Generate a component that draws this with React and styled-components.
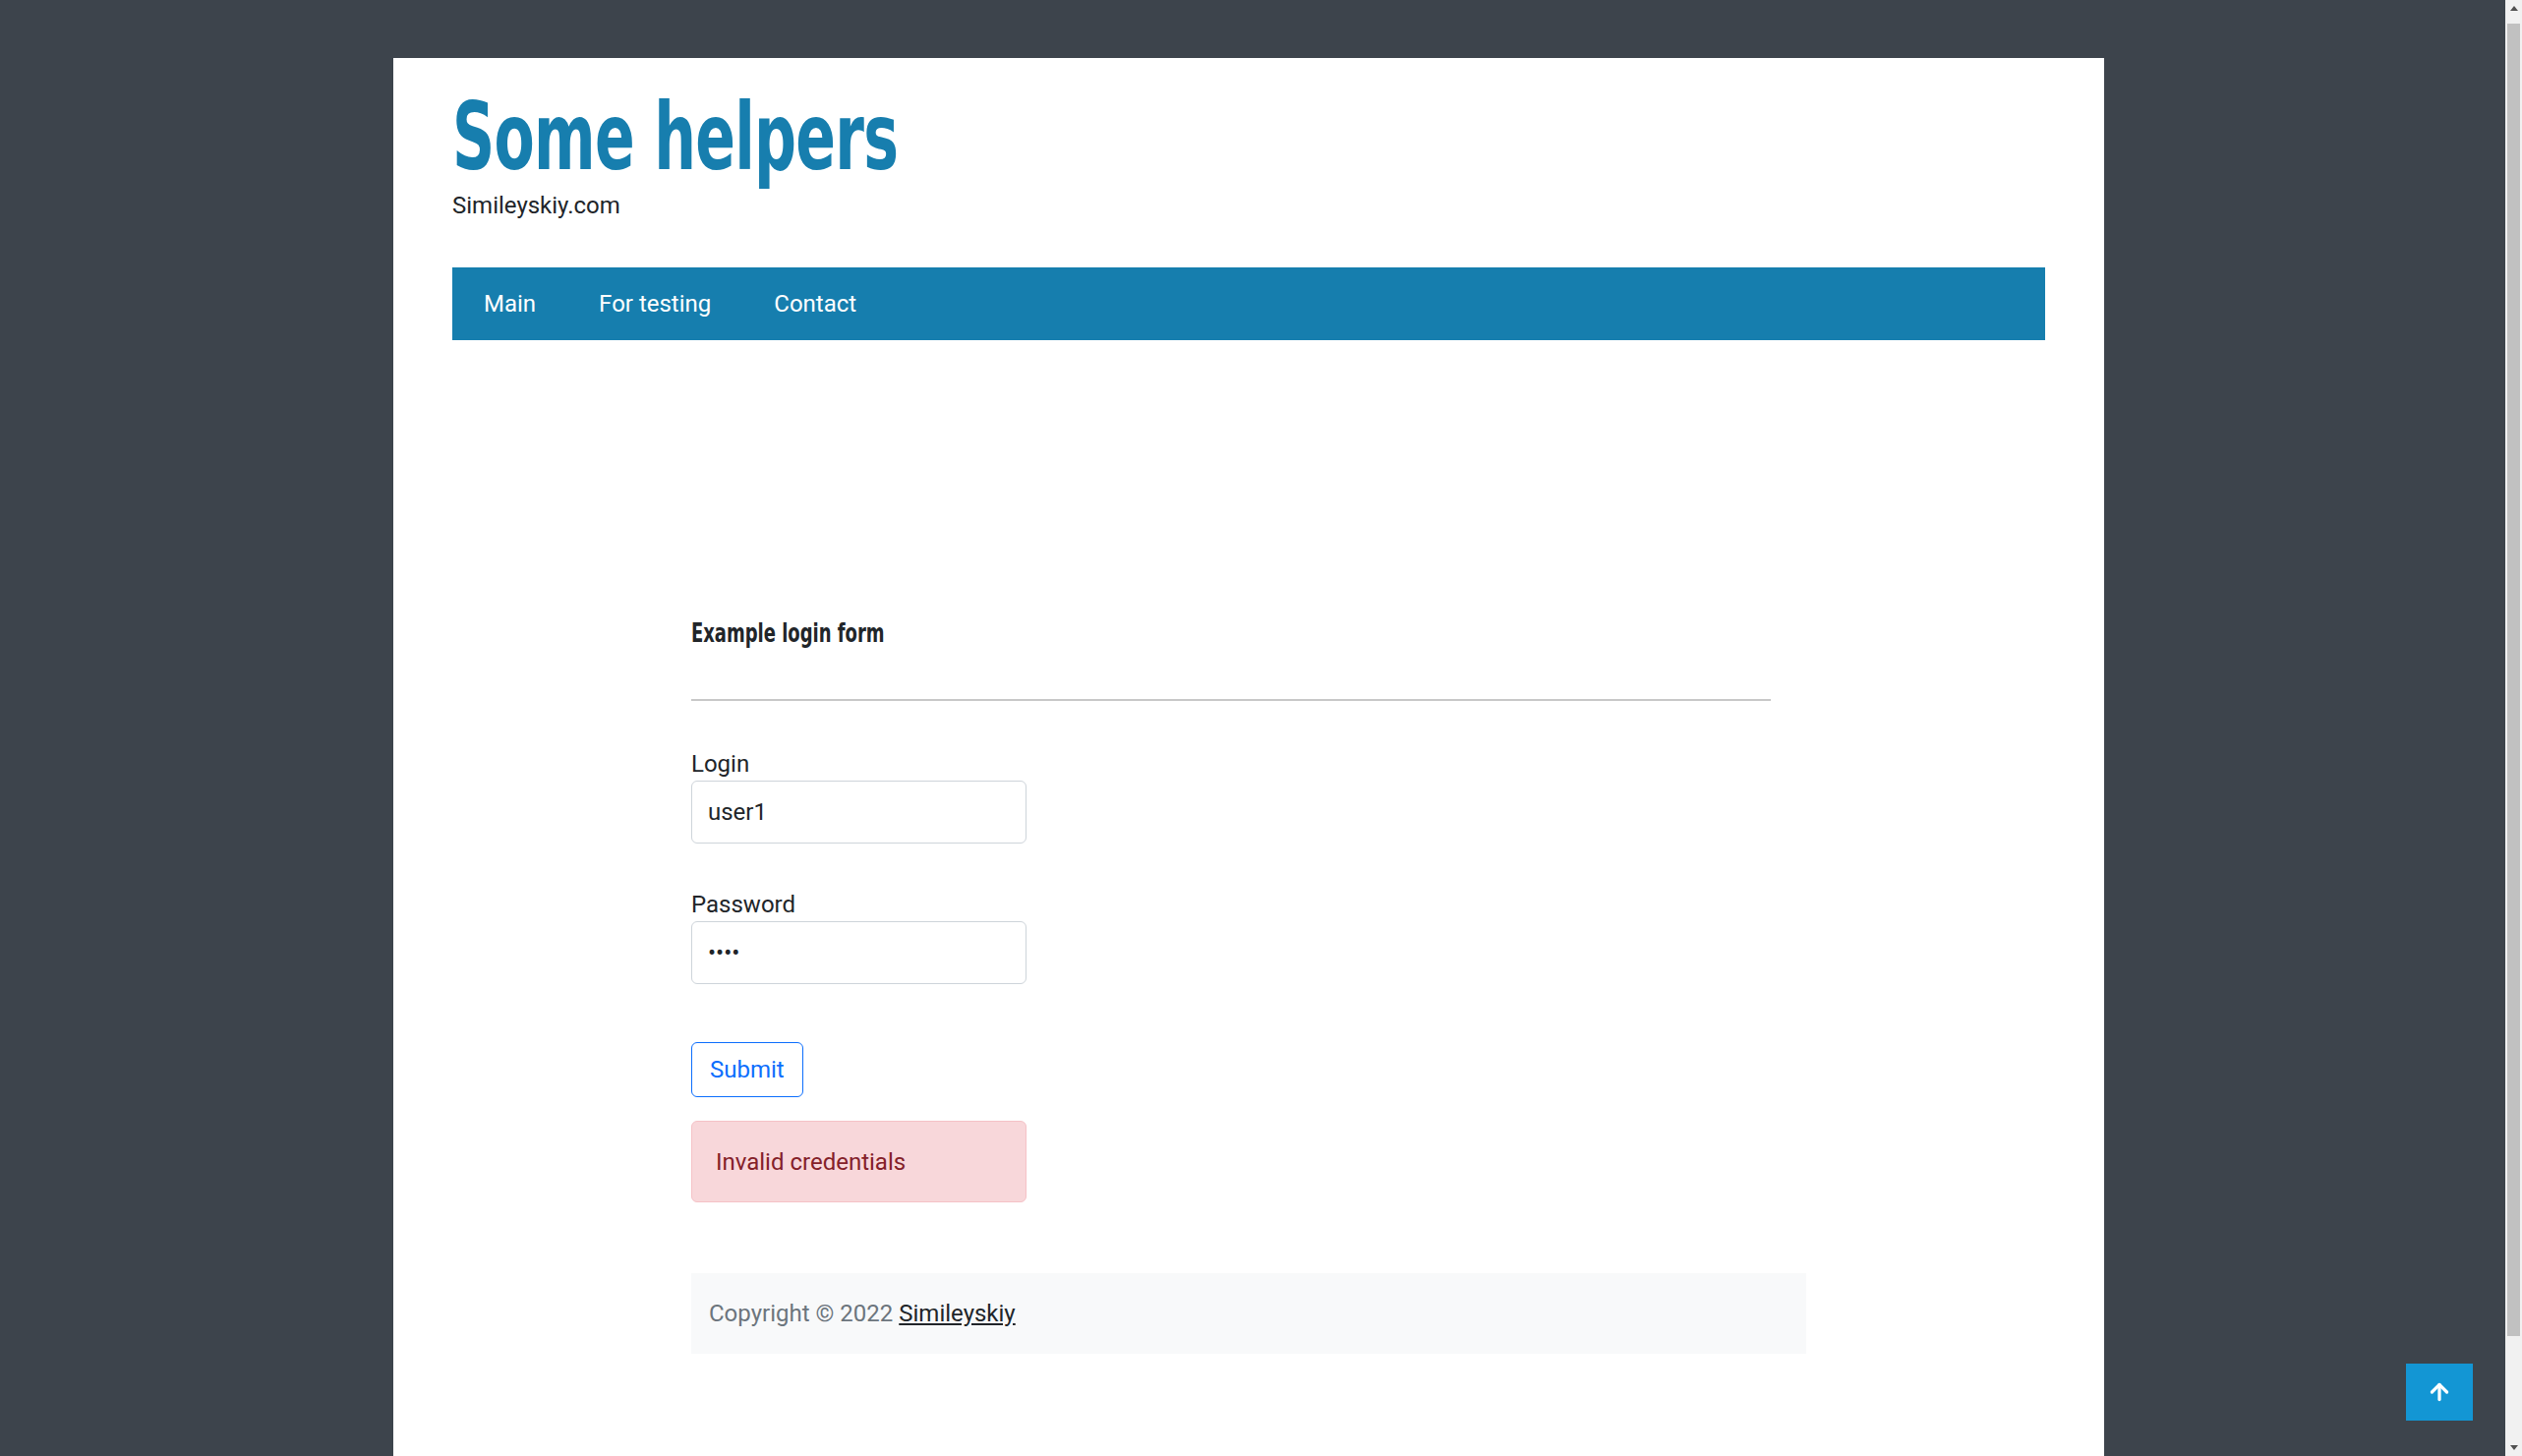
import React from "react";
import styled, { createGlobalStyle } from "styled-components";
import { ArrowUp } from "lucide-react";

const GlobalStyle = createGlobalStyle`
  html, body {
    margin: 0;
    padding: 0;
  }
  body {
    background: #3d444c;
    font-family: Roboto, "Liberation Sans", sans-serif;
    color: #212529;
  }
  * {
    box-sizing: border-box;
  }
`;

const condensed = `"DejaVu Sans Condensed", "Liberation Sans", sans-serif`;

const Page = styled.div`
  padding: 59px 25px 0 0;
`;

const Container = styled.div`
  width: 1740px;
  margin: 0 auto;
  background: #fff;
  padding: 29px 60px 0;
`;

const Header = styled.header`
  display: flex;
  flex-direction: column;
  align-items: flex-start;
`;

const SiteTitle = styled.h1`
  margin: 0;
  font-family: ${condensed};
  font-weight: 700;
  font-size: 94px;
  line-height: 103px;
  letter-spacing: -1px;
  color: #177eae;
  transform: scaleX(0.71);
  transform-origin: left center;
`;

const SiteSub = styled.div`
  font-size: 24px;
  line-height: 36px;
  color: #212529;
`;

const Nav = styled.nav`
  margin-top: 45px;
  height: 74px;
  background: #167eae;
  display: flex;
`;

const NavLink = styled.a`
  padding: 0 32px;
  line-height: 74px;
  font-size: 24px;
  color: #fff;
  text-decoration: none;
`;

const Column = styled.main`
  width: 1134px;
  margin: 0 auto;
  padding: 282px 0 227px;
`;

const FormTitle = styled.h5`
  margin: 0;
  font-family: ${condensed};
  font-weight: 700;
  font-size: 27px;
  line-height: 32px;
  color: #212529;
  transform: scaleX(0.74);
  transform-origin: left center;
`;

const Rule = styled.hr`
  width: 1098px;
  margin: 51px 0 50px;
  border: 0;
  border-top: 2px solid #c8c8c8;
`;

const Group = styled.div`
  display: flex;
  flex-direction: column;
  align-items: flex-start;
  margin-bottom: 48px;
`;

const Label = styled.label`
  font-size: 24px;
  line-height: 29px;
  color: #212529;
`;

const Input = styled.input`
  margin-top: 2px;
  width: 341px;
  height: 64px;
  padding: 0 16px;
  font-family: Roboto, "Liberation Sans", sans-serif;
  font-size: 24px;
  color: #212529;
  background: #fff;
  border: 1.5px solid #ced4da;
  border-radius: 6px;
  outline: none;
`;

const SubmitButton = styled.button`
  margin-top: 11px;
  height: 56px;
  padding: 0 18px;
  font-family: Roboto, "Liberation Sans", sans-serif;
  font-size: 24px;
  color: #0d6efd;
  background: #fff;
  border: 1.5px solid #0d6efd;
  border-radius: 6px;
  cursor: pointer;
`;

const Alert = styled.div`
  margin-top: 24px;
  width: 341px;
  height: 83px;
  padding: 0 24px;
  display: flex;
  align-items: center;
  font-size: 24px;
  color: #842029;
  background: #f8d7da;
  border: 1.5px solid #f5c2c7;
  border-radius: 6px;
`;

const Footer = styled.footer`
  margin-top: 72px;
  height: 82px;
  padding: 0 18px;
  display: flex;
  align-items: center;
  background: #f8f9fa;
  font-size: 24px;
  color: #6c757d;

  a {
    color: #212529;
    margin-left: 6px;
  }
`;

const ScrollTop = styled.button`
  position: fixed;
  right: 50px;
  bottom: 36px;
  width: 68px;
  height: 58px;
  border: 0;
  background: #1396d4;
  color: #fff;
  display: flex;
  align-items: center;
  justify-content: center;
  cursor: pointer;
`;

/* window scrollbar, as seen in the screenshot */
const Scrollbar = styled.div`
  position: fixed;
  top: 0;
  right: 0;
  width: 17px;
  height: 100vh;
  background: #f1f1f1;
  display: flex;
  flex-direction: column;
`;

const ScrollArrow = styled.div`
  height: 17px;
  flex: none;
  display: flex;
  align-items: center;
  justify-content: center;

  &::after {
    content: "";
    border-left: 4.5px solid transparent;
    border-right: 4.5px solid transparent;
    ${(p) =>
      p.$down
        ? "border-top: 5px solid #505050;"
        : "border-bottom: 5px solid #505050;"}
  }
`;

const ScrollTrack = styled.div`
  flex: 1;
  padding: 7px 2px 0;
`;

const ScrollThumb = styled.div`
  height: 1335px;
  background: #c1c1c1;
`;

export default function App() {
  return (
    <>
      <GlobalStyle />
      <Page>
        <Container>
          <Header>
            <SiteTitle>Some helpers</SiteTitle>
            <SiteSub>Simileyskiy.com</SiteSub>
          </Header>
          <Nav>
            <NavLink href="#">Main</NavLink>
            <NavLink href="#">For testing</NavLink>
            <NavLink href="#">Contact</NavLink>
          </Nav>
          <Column>
            <FormTitle>Example login form</FormTitle>
            <Rule />
            <form onSubmit={(e) => e.preventDefault()}>
              <Group>
                <Label htmlFor="login">Login</Label>
                <Input id="login" type="text" defaultValue="user1" />
              </Group>
              <Group>
                <Label htmlFor="password">Password</Label>
                <Input id="password" type="password" defaultValue="1234" />
              </Group>
              <SubmitButton type="submit">Submit</SubmitButton>
              <Alert>Invalid credentials</Alert>
            </form>
            <Footer>
              Copyright © 2022<a href="#">Simileyskiy</a>
            </Footer>
          </Column>
        </Container>
      </Page>
      <ScrollTop aria-label="Scroll to top">
        <ArrowUp size={26} strokeWidth={3} />
      </ScrollTop>
      <Scrollbar>
        <ScrollArrow />
        <ScrollTrack>
          <ScrollThumb />
        </ScrollTrack>
        <ScrollArrow $down />
      </Scrollbar>
    </>
  );
}
